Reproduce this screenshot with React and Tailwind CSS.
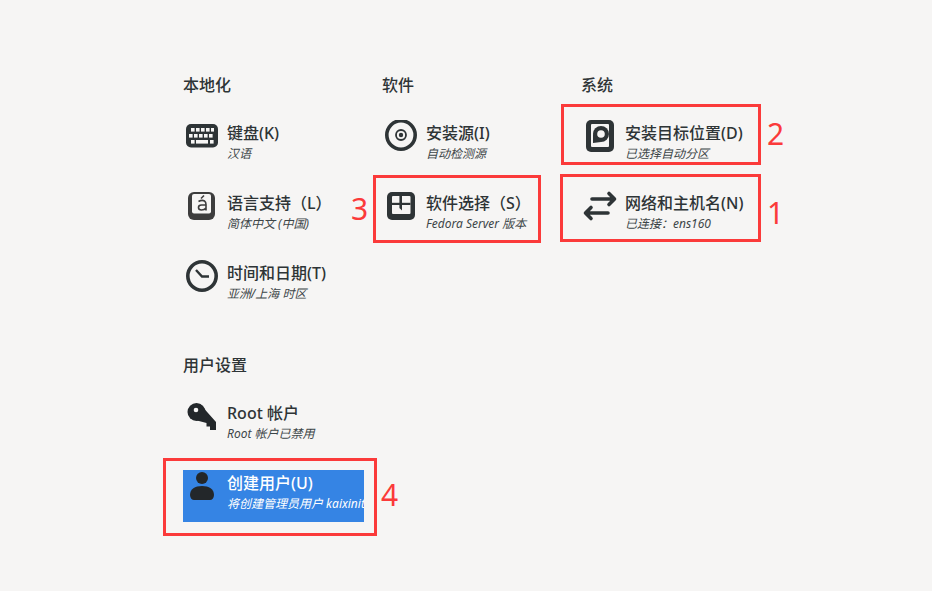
import React from "react";

const Keyboard = () => (
  <svg width="38" height="32" viewBox="0 0 38 32">
    <rect x="3" y="4" width="32" height="23.5" rx="5" fill="#2e3436" />
    <g fill="#f6f5f4">
      <rect x="8" y="8" width="3.6" height="3.6" />
      <rect x="13" y="8" width="3.6" height="3.6" />
      <rect x="18" y="8" width="3.6" height="3.6" />
      <rect x="23" y="8" width="3.6" height="3.6" />
      <rect x="28" y="8" width="3" height="3.6" />
      <rect x="6" y="14" width="3.6" height="3.6" />
      <rect x="11" y="14" width="3.6" height="3.6" />
      <rect x="16" y="14" width="3.6" height="3.6" />
      <rect x="21" y="14" width="3.6" height="3.6" />
      <rect x="26" y="14" width="3.6" height="3.6" />
      <rect x="8" y="20" width="3.6" height="3.6" />
      <rect x="13" y="20" width="12" height="3.6" />
      <rect x="27" y="20" width="3.6" height="3.6" />
    </g>
  </svg>
);

const Language = () => (
  <svg width="38" height="32" viewBox="0 0 38 32">
    <rect x="5" y="2" width="27" height="28" rx="6" fill="#3d3d3d" />
    <rect x="9" y="4" width="19" height="19.5" rx="2" fill="#f6f5f4" />
    <path d="M21 5.5 L18 8.5" stroke="#3d3d3d" strokeWidth="1.6" fill="none" />
    <path
      d="M15.5 11.5 Q19 9.5 21.5 11 Q23 12 23 14.5 V20.5 M23 15 H18.5 Q15.5 15 15.5 17.5 Q15.5 20 18.5 20 Q21.5 20 23 18"
      stroke="#3d3d3d"
      strokeWidth="1.6"
      fill="none"
    />
  </svg>
);

const Clock = () => (
  <svg width="38" height="32" viewBox="0 0 38 32">
    <circle cx="19" cy="16" r="14.2" fill="none" stroke="#2e3436" strokeWidth="3.6" />
    <path d="M13 10 L19 16.5 H26" fill="none" stroke="#2e3436" strokeWidth="2.4" />
  </svg>
);

const Disc = () => (
  <svg width="38" height="32" viewBox="0 0 38 32">
    <circle cx="19" cy="15" r="14.2" fill="none" stroke="#2e3436" strokeWidth="3.6" />
    <circle cx="19" cy="15" r="5" fill="none" stroke="#2e3436" strokeWidth="1.8" />
    <circle cx="19" cy="15" r="2.2" fill="#2e3436" />
  </svg>
);

const Package = () => (
  <svg width="38" height="32" viewBox="0 0 38 32">
    <rect x="5" y="2" width="28" height="28" rx="5" fill="#2e3436" />
    <rect x="10" y="6" width="18.5" height="18" rx="1" fill="#f6f5f4" />
    <rect x="10" y="12.8" width="18.5" height="2.2" fill="#2e3436" />
    <path d="M17.4 6 H20 V20.5 L17.4 18 Z" fill="#2e3436" />
  </svg>
);

const Drive = () => (
  <svg width="38" height="32" viewBox="0 0 38 32">
    <rect x="5" y="0" width="28" height="32" rx="5" fill="#2e3436" />
    <rect x="10" y="4" width="18" height="23" rx="1" fill="#f6f5f4" />
    <circle cx="20" cy="14" r="8" fill="#2e3436" />
    <path d="M12 23 V14 L20 22 Z" fill="#2e3436" />
    <circle cx="20" cy="14" r="3.8" fill="#f6f5f4" />
  </svg>
);

const Network = () => (
  <svg width="38" height="32" viewBox="0 0 38 32">
    <path
      d="M11 9 H33 M28 3.5 L33.5 9 L28 14.5 M27 23 H5 M10 17.5 L4.5 23 L10 28.5"
      fill="none"
      stroke="#2e3436"
      strokeWidth="3.6"
      strokeLinecap="round"
      strokeLinejoin="round"
    />
  </svg>
);

const KeyIcon = () => (
  <svg width="38" height="32" viewBox="0 0 38 32">
    <circle cx="13.5" cy="12" r="9" fill="#23272a" />
    <path d="M17 4 L33 22 V30 H27 V26.5 H23.5 V23 L14 20.5 Z" fill="#23272a" />
    <circle cx="13" cy="10" r="2.3" fill="#f6f5f4" />
  </svg>
);

const User = () => (
  <svg width="38" height="32" viewBox="0 0 38 32">
    <circle cx="19" cy="8" r="6" fill="#23272a" />
    <path d="M7 25 C7 19 12 16 19 16 C26 16 31 19 31 25 C31 28 29 30 27 30 H11 C9 30 7 28 7 25 Z" fill="#23272a" />
  </svg>
);

const Spoke = ({ icon, title, sub, selected }) => (
  <div className={`flex h-[52px] w-[181px] overflow-hidden pt-[3px] ${selected ? "bg-[#3584e4]" : ""}`}>
    <div className="-mt-[3px] w-[44px] shrink-0">{icon}</div>
    <div className="min-w-0 whitespace-nowrap">
      <div className={`text-[16px] leading-[20px] font-medium ${selected ? "text-white" : "text-[#2e3436]"}`}>{title}</div>
      <div className={`mt-px text-[12px] leading-[20px] italic ${selected ? "text-white" : "text-[#3d4548]"}`}>{sub}</div>
    </div>
  </div>
);

const Section = ({ title, children }) => (
  <section className="w-[199px]">
    <h2 className="mb-[23px] text-[16px] leading-[24px] font-medium text-[#2e3436]">{title}</h2>
    <div className="flex flex-col gap-[18px]">{children}</div>
  </section>
);

// red annotations drawn on top of the screenshot
const Mark = ({ className }) => <div className={`absolute border-[3px] border-[#fb3a3a] ${className}`} />;
const Num = ({ className, children }) => (
  <div className={`absolute text-[30px] leading-[40px] text-[#fb3a3a] ${className}`}>{children}</div>
);

export default function App() {
  return (
    <div
      className="relative h-[591px] w-[932px] overflow-hidden bg-[#f6f5f4] pt-[73px] pl-[183px]"
      style={{ fontFamily: '"Noto Sans", "Noto Sans CJK SC", sans-serif' }}
    >
      <div className="flex">
        <Section title="本地化">
          <Spoke icon={<Keyboard />} title="键盘(K)" sub="汉语" />
          <Spoke icon={<Language />} title="语言支持（L）" sub="简体中文 (中国)" />
          <Spoke icon={<Clock />} title="时间和日期(T)" sub="亚洲/上海 时区" />
        </Section>
        <Section title="软件">
          <Spoke icon={<Disc />} title="安装源(I)" sub="自动检测源" />
          <Spoke icon={<Package />} title="软件选择（S）" sub="Fedora Server 版本" />
        </Section>
        <Section title="系统">
          <Spoke icon={<Drive />} title="安装目标位置(D)" sub="已选择自动分区" />
          <Spoke icon={<Network />} title="网络和主机名(N)" sub="已连接：ens160" />
        </Section>
      </div>
      <div className="mt-[41px]">
        <Section title="用户设置">
          <Spoke icon={<KeyIcon />} title="Root 帐户" sub="Root 帐户已禁用" />
          <Spoke icon={<User />} title="创建用户(U)" sub="将创建管理员用户 kaixinit" selected />
        </Section>
      </div>

      <Mark className="top-[104px] left-[561px] h-[61px] w-[200px]" />
      <Mark className="top-[174px] left-[560px] h-[68px] w-[201px]" />
      <Mark className="top-[175px] left-[373px] h-[68px] w-[168px]" />
      <Mark className="top-[458px] left-[163px] h-[78px] w-[214px]" />
      <Num className="top-[114px] left-[767px]">2</Num>
      <Num className="top-[193px] left-[767px]">1</Num>
      <Num className="top-[189px] left-[351px]">3</Num>
      <Num className="top-[475px] left-[381px]">4</Num>
    </div>
  );
}
